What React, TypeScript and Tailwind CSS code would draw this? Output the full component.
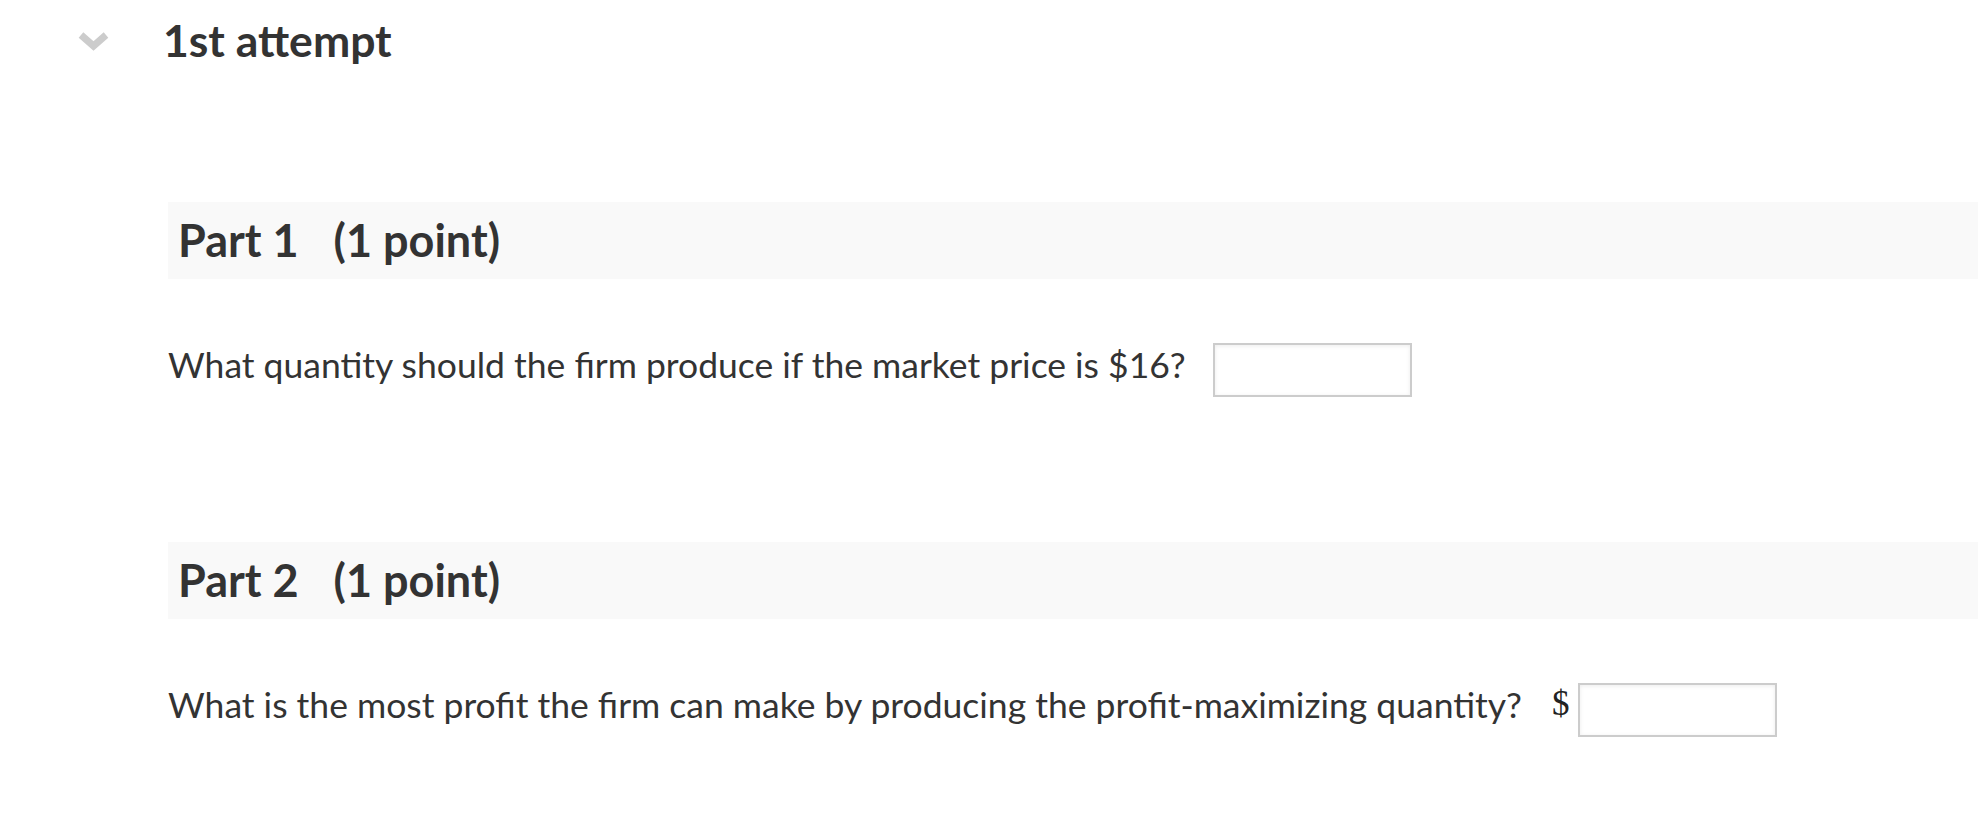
import React from "react";

type Part = {
  n: number;
  points: number;
  question: string;
  prefix?: string;
};

const PARTS: Part[] = [
  { n: 1, points: 1, question: "What quantity should the firm produce if the market price is $16?" },
  { n: 2, points: 1, question: "What is the most profit the firm can make by producing the profit-maximizing quantity?", prefix: "$" },
];

function Chevron() {
  return (
    <svg width="31" height="20" viewBox="0 0 31 20" className="shrink-0">
      <polyline points="3,4 15.5,15 28,4" fill="none" stroke="#cccccc" strokeWidth="7" strokeLinejoin="miter" />
    </svg>
  );
}

function PartBlock({ part }: { part: Part }) {
  return (
    <section>
      <div className="flex h-[77px] items-center bg-[#f9f9f9] pl-[10px] text-[45px] font-bold leading-[77px] text-[#333333]">
        <span>Part {part.n}</span>
        <span className="ml-[35px]">({part.points} point)</span>
      </div>
      <div className="mt-[64px] flex items-start text-[35.5px] leading-[43px] text-[#333333]">
        <span>{part.question}</span>
        {part.prefix ? (
          <span className="ml-[30px] mr-[9px] mt-[-1px] font-['Liberation_Serif',serif] text-[35px] text-[#222222]">{part.prefix}</span>
        ) : (
          <span className="w-[27px]" />
        )}
        <input
          type="text"
          className="h-[54px] w-[199px] border-2 border-[#cccccc] bg-white shadow-[inset_0_1px_4px_rgba(0,0,0,0.08)] outline-none"
        />
      </div>
    </section>
  );
}

export default function App() {
  return (
    <main className="min-h-screen bg-white font-['Lato','Liberation_Sans',sans-serif]">
      <div className="flex items-center pt-[13px]">
        <div className="ml-[78px] mt-[2px]">
          <Chevron />
        </div>
        <h1 className="ml-[54px] text-[44.5px] font-bold leading-[1.2] text-[#333333]">1st attempt</h1>
      </div>
      <div className="mt-[136px] flex flex-col gap-[145px] pl-[168px]">
        {PARTS.map((p) => (
          <PartBlock key={p.n} part={p} />
        ))}
      </div>
    </main>
  );
}
